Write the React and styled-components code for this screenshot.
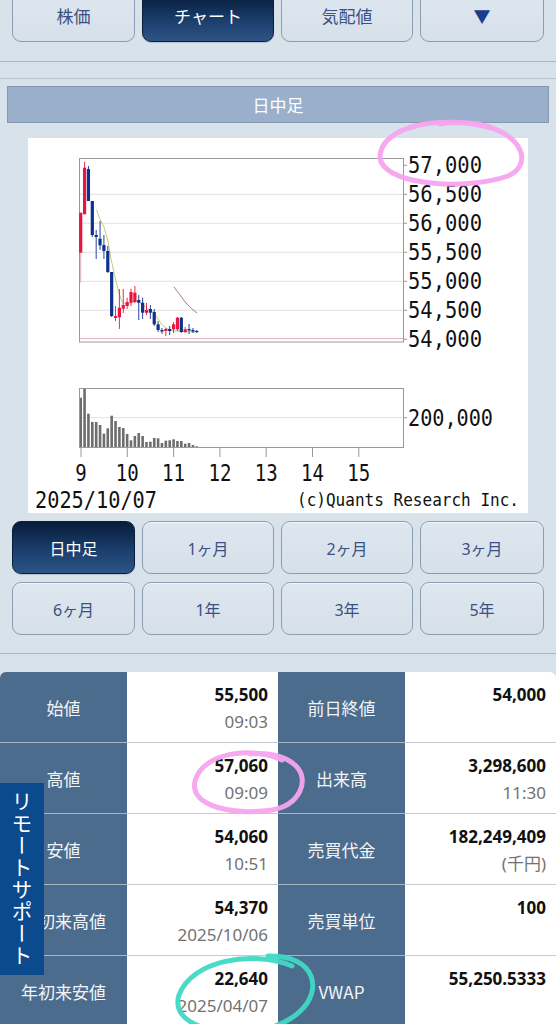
import React from "react";
import styled, { createGlobalStyle } from "styled-components";

const GlobalStyle = createGlobalStyle`
  html, body {
    margin: 0;
    padding: 0;
    background: #d7e2eb;
  }
  body {
    font-family: "Noto Sans", "Noto Sans CJK JP", sans-serif;
  }
`;

const tabs = ["株価", "チャート", "気配値", "▼"];
const periods = ["日中足", "1ヶ月", "2ヶ月", "3ヶ月", "6ヶ月", "1年", "3年", "5年"];

const rows = [
  ["始値", "55,500", "09:03", "前日終値", "54,000", ""],
  ["高値", "57,060", "09:09", "出来高", "3,298,600", "11:30"],
  ["安値", "54,060", "10:51", "売買代金", "182,249,409", "(千円)"],
  ["年初来高値", "54,370", "2025/10/06", "売買単位", "100", ""],
  ["年初来安値", "22,640", "2025/04/07", "VWAP", "55,250.5333", ""],
];

// [bodyTop, bodyBottom, wickTop, wickBottom, up]
const candles = [
  [211.7, 251.7, 211.7, 281.7, 1],
  [166.7, 213.3, 161, 213.3, 1],
  [168, 200, 165, 200, 0],
  [200, 234, 200, 236, 0],
  [234, 236, 229, 258, 0],
  [237.7, 244.3, 220, 249, 0],
  [244, 250, 234, 258, 0],
  [250, 271, 245, 272, 0],
  [271, 315, 271, 316, 0],
  [315, 317, 305, 320, 1],
  [306.7, 316.3, 288, 328, 1],
  [304, 307.7, 288, 312, 1],
  [301, 305, 296.7, 308, 1],
  [291, 301.7, 287.7, 305, 1],
  [291.7, 301, 285, 302, 1],
  [299, 301.7, 294, 319, 0],
  [301.7, 311.7, 296.7, 318, 0],
  [309, 311.7, 302, 314, 1],
  [308, 311.7, 304, 318, 0],
  [311, 323.3, 308, 325, 0],
  [323.3, 329, 320, 331, 0],
  [329, 330.5, 327, 333, 0],
  [328, 330, 327, 335, 1],
  [328, 330, 325, 334, 0],
  [323.3, 328.3, 321, 332, 1],
  [316.7, 328.3, 316, 330, 1],
  [316.7, 331, 316, 332, 0],
  [328.3, 331, 326, 332, 1],
  [328, 329.5, 323, 333, 0],
  [329, 330.5, 327, 332, 0],
  [330, 331, 329, 332, 0],
];

const volumes = [
  396.7, 387.7, 412.7, 421, 421, 424, 432.7, 427.3, 414.7, 420, 426, 427, 433,
  439.3, 435, 432, 435, 441, 440.7, 437, 437.3, 442, 439.7, 439.3, 438.3, 440,
  440, 442.7, 442, 444, 445.3,
];

const ma = [
  [96.5, 209], [100, 218], [104, 226], [108, 240], [111, 258], [115, 276],
  [119, 292], [122, 301], [127, 304], [131, 302], [135, 300], [139, 301],
  [143, 304], [147, 307], [150, 309], [154, 312], [158, 318], [162, 324],
  [166, 327], [170, 329], [174, 330], [181, 330], [189, 331], [196, 331],
];
const ma2 = [[174, 286], [180, 294], [186, 302], [192, 308], [197, 312]];

const priceLabels = ["57,000", "56,500", "56,000", "55,500", "55,000", "54,500", "54,000"];
const hours = ["9", "10", "11", "12", "13", "14", "15"];

const candleX = (i) => 80.7 + i * 3.87;
const pts = (list) => list.map((p) => p.join(",")).join(" ");

function Chart() {
  return (
    <svg width="500" height="375" viewBox="28 137 500 375">
      <g fontFamily="'DejaVu Sans Mono', monospace" fill="#111">
        {/* price pane */}
        {priceLabels.map((l, i) => {
          const y = 164.3 + i * 29;
          return (
            <g key={l}>
              {i > 0 && i < 6 && (
                <line x1="80" x2="403" y1={y} y2={y} stroke="#e2e2e2" />
              )}
              <line x1="403" x2="407" y1={y} y2={y} stroke="#999" />
              <text
                x="408"
                y={y + 8}
                fontSize="23"
                textLength="74"
                lengthAdjust="spacingAndGlyphs"
              >
                {l}
              </text>
            </g>
          );
        })}
        <line x1="80" x2="403" y1="337.7" y2="337.7" stroke="#e6a6c6" />
        <rect x="79.5" y="157.5" width="324" height="183.5" fill="none" stroke="#9a9a9a" />
        <polyline points={pts(ma)} fill="none" stroke="#c2cc7c" strokeWidth="1" />
        <polyline points={pts(ma2)} fill="none" stroke="#a57a9a" strokeWidth="1" />
        {candles.map(([bt, bb, wt, wb, up], i) => {
          const x = candleX(i);
          const c = up ? "#e6163e" : "#10308e";
          return (
            <g key={i}>
              <line
                x1={x}
                x2={x}
                y1={wt}
                y2={wb}
                stroke={i === 0 ? "#d8a8b8" : c}
                strokeWidth="0.9"
              />
              <rect x={x - 1.6} y={bt} width="3.2" height={Math.max(bb - bt, 1)} fill={c} />
            </g>
          );
        })}

        {/* volume pane */}
        <line x1="80" x2="403" y1="416.7" y2="416.7" stroke="#e2e2e2" />
        <line x1="403" x2="407" y1="416.7" y2="416.7" stroke="#999" />
        <text x="408" y="425" fontSize="23" textLength="85" lengthAdjust="spacingAndGlyphs">
          200,000
        </text>
        {volumes.map((top, i) => (
          <rect
            key={i}
            x={candleX(i) - 1.3}
            y={top}
            width="2.6"
            height={446.5 - top}
            fill="#6e6e6e"
          />
        ))}
        <rect x="79.5" y="387.5" width="324" height="59" fill="none" stroke="#9a9a9a" />
        {hours.map((h, i) => {
          const x = 81 + i * 46.3;
          return (
            <g key={h}>
              <line x1={x} x2={x} y1="447" y2="456" stroke="#999" />
              <text
                x={x}
                y="480"
                fontSize="23"
                textAnchor="middle"
                textLength={h.length * 11.5}
                lengthAdjust="spacingAndGlyphs"
              >
                {h}
              </text>
            </g>
          );
        })}
        <text x="35" y="507" fontSize="23" textLength="122" lengthAdjust="spacingAndGlyphs">
          2025/10/07
        </text>
        <text x="297" y="505" fontSize="18" textLength="222" lengthAdjust="spacingAndGlyphs">
          (c)Quants Research Inc.
        </text>
      </g>
    </svg>
  );
}

function App() {
  return (
    <Page>
      <GlobalStyle />
      <TabSection>
        <ButtonGrid>
          {tabs.map((t, i) => (
            <TabButton key={t} active={i === 1} arrow={t === "▼"}>
              {t}
            </TabButton>
          ))}
        </ButtonGrid>
      </TabSection>

      <ChartSection>
        <PaneTitle>日中足</PaneTitle>
        <ChartPanel>
          <Chart />
        </ChartPanel>
        <PeriodGrid>
          {periods.map((p, i) => (
            <PeriodButton key={p} active={i === 0}>
              {p}
            </PeriodButton>
          ))}
        </PeriodGrid>
      </ChartSection>

      <QuoteTable>
        {rows.map(([l1, v1, s1, l2, v2, s2]) => (
          <React.Fragment key={l1}>
            <LabelCell>{l1}</LabelCell>
            <ValueCell>
              <Value>{v1}</Value>
              <Sub>{s1}</Sub>
            </ValueCell>
            <LabelCell>{l2}</LabelCell>
            <ValueCell>
              <Value>{v2}</Value>
              <Sub>{s2}</Sub>
            </ValueCell>
          </React.Fragment>
        ))}
      </QuoteTable>

      <SupportTab>リモートサポート</SupportTab>

      <Marks width="556" height="1024" viewBox="0 0 556 1024">
        <path
          d="M492 128 C440 114 382 126 380 156 C379 184 462 192 508 176 C532 166 526 134 478 124 C465 122 452 122 440 124"
          stroke="#f6a4ee"
        />
        <path
          d="M282 760 C252 746 203 752 195 781 C189 808 236 815 272 810 C300 805 310 780 296 766 C286 756 268 752 250 754"
          stroke="#f6a4ee"
        />
        <path
          d="M292 966 C252 950 192 960 179 995 C171 1020 204 1034 246 1032 C294 1028 320 1000 311 976 C305 962 290 956 268 956"
          stroke="#3fd9c4"
        />
      </Marks>
    </Page>
  );
}

const Page = styled.div`
  position: relative;
  width: 556px;
  height: 1024px;
  overflow: hidden;
  background: #d7e2eb;
`;

const TabSection = styled.div`
  padding: 0 0 19px;
  border-bottom: 1px solid #a9b5c1;
`;

const ButtonGrid = styled.div`
  display: grid;
  grid-template-columns: 123px 132px 132px 124px;
  column-gap: 7px;
  padding-left: 12px;
  margin-top: -6px;
`;

const buttonBase = ({ active }) => `
  display: flex;
  align-items: center;
  justify-content: center;
  box-sizing: border-box;
  font-family: "Noto Sans", "Noto Sans CJK JP", sans-serif;
  color: ${active ? "#ffffff" : "#3b5182"};
  background: ${
    active
      ? "linear-gradient(180deg, #071c3a 0%, #1b3e6c 55%, #2d5486 100%)"
      : "linear-gradient(180deg, #dee7ef 0%, #d6e0e9 100%)"
  };
  border: 1px solid ${active ? "#0a1f3d" : "#8c9db2"};
  box-shadow: ${active ? "0 1px 1px rgba(0,0,0,0.15)" : "inset 0 1px 0 #f2f6f9"};
`;

const TabButton = styled.div`
  ${buttonBase}
  height: 48px;
  padding-bottom: 5px;
  border-radius: 0 0 9px 9px;
  font-size: 17px;
  color: ${({ arrow, active }) => (arrow ? "#1c3c8e" : active ? "#fff" : "#3b5182")};
`;

const ChartSection = styled.div`
  margin-top: 16px;
  border-top: 1px solid #b8c4ce;
  border-bottom: 1px solid #aab6c2;
  padding: 7px 7px 18px;
`;

const PaneTitle = styled.div`
  height: 35px;
  display: flex;
  align-items: center;
  justify-content: center;
  background: #99afcb;
  border: 1px solid #8598b2;
  color: #ffffff;
  font-size: 17px;
  font-family: "Noto Sans CJK JP", sans-serif;
`;

const ChartPanel = styled.div`
  margin: 15px 21px 0;
  height: 375px;
  background: #ffffff;
  overflow: hidden;
  svg {
    display: block;
  }
`;

const PeriodGrid = styled.div`
  display: grid;
  grid-template-columns: 123px 132px 132px 124px;
  grid-template-rows: 53px 53px;
  gap: 8px 7px;
  margin: 8px 0 0 5px;
`;

const PeriodButton = styled.div`
  ${buttonBase}
  border-radius: 9px;
  font-size: 16px;
`;

const QuoteTable = styled.div`
  margin-top: 18px;
  display: grid;
  grid-template-columns: 127px 151px 127px 151px;
  grid-auto-rows: 71px;
  border-radius: 6px 6px 0 0;
  overflow: hidden;
`;

const LabelCell = styled.div`
  display: flex;
  align-items: center;
  justify-content: center;
  background: #4c6c8e;
  color: #f2f5f8;
  font-size: 17px;
  font-family: "Noto Sans CJK JP", sans-serif;
  border-bottom: 1px solid #a8b6c4;
`;

const ValueCell = styled.div`
  background: #ffffff;
  text-align: right;
  padding: 10px 10px 0;
  border-bottom: 1px solid #c3cbd3;
`;

const Value = styled.div`
  font-size: 17px;
  font-weight: 700;
  line-height: 26px;
  color: #111111;
`;

const Sub = styled.div`
  font-size: 17px;
  line-height: 28px;
  color: #727272;
`;

const SupportTab = styled.div`
  position: absolute;
  left: 0;
  top: 783px;
  width: 44px;
  height: 192px;
  box-sizing: border-box;
  display: flex;
  align-items: center;
  justify-content: center;
  background: #0b4a8d;
  color: #ffffff;
  writing-mode: vertical-rl;
  font-size: 21px;
  letter-spacing: 1px;
  font-family: "Noto Sans CJK JP", sans-serif;
`;

const Marks = styled.svg`
  position: absolute;
  left: 0;
  top: 0;
  pointer-events: none;
  path {
    fill: none;
    stroke-width: 5;
    stroke-linecap: round;
    stroke-linejoin: round;
    opacity: 0.95;
  }
`;

export default App;
